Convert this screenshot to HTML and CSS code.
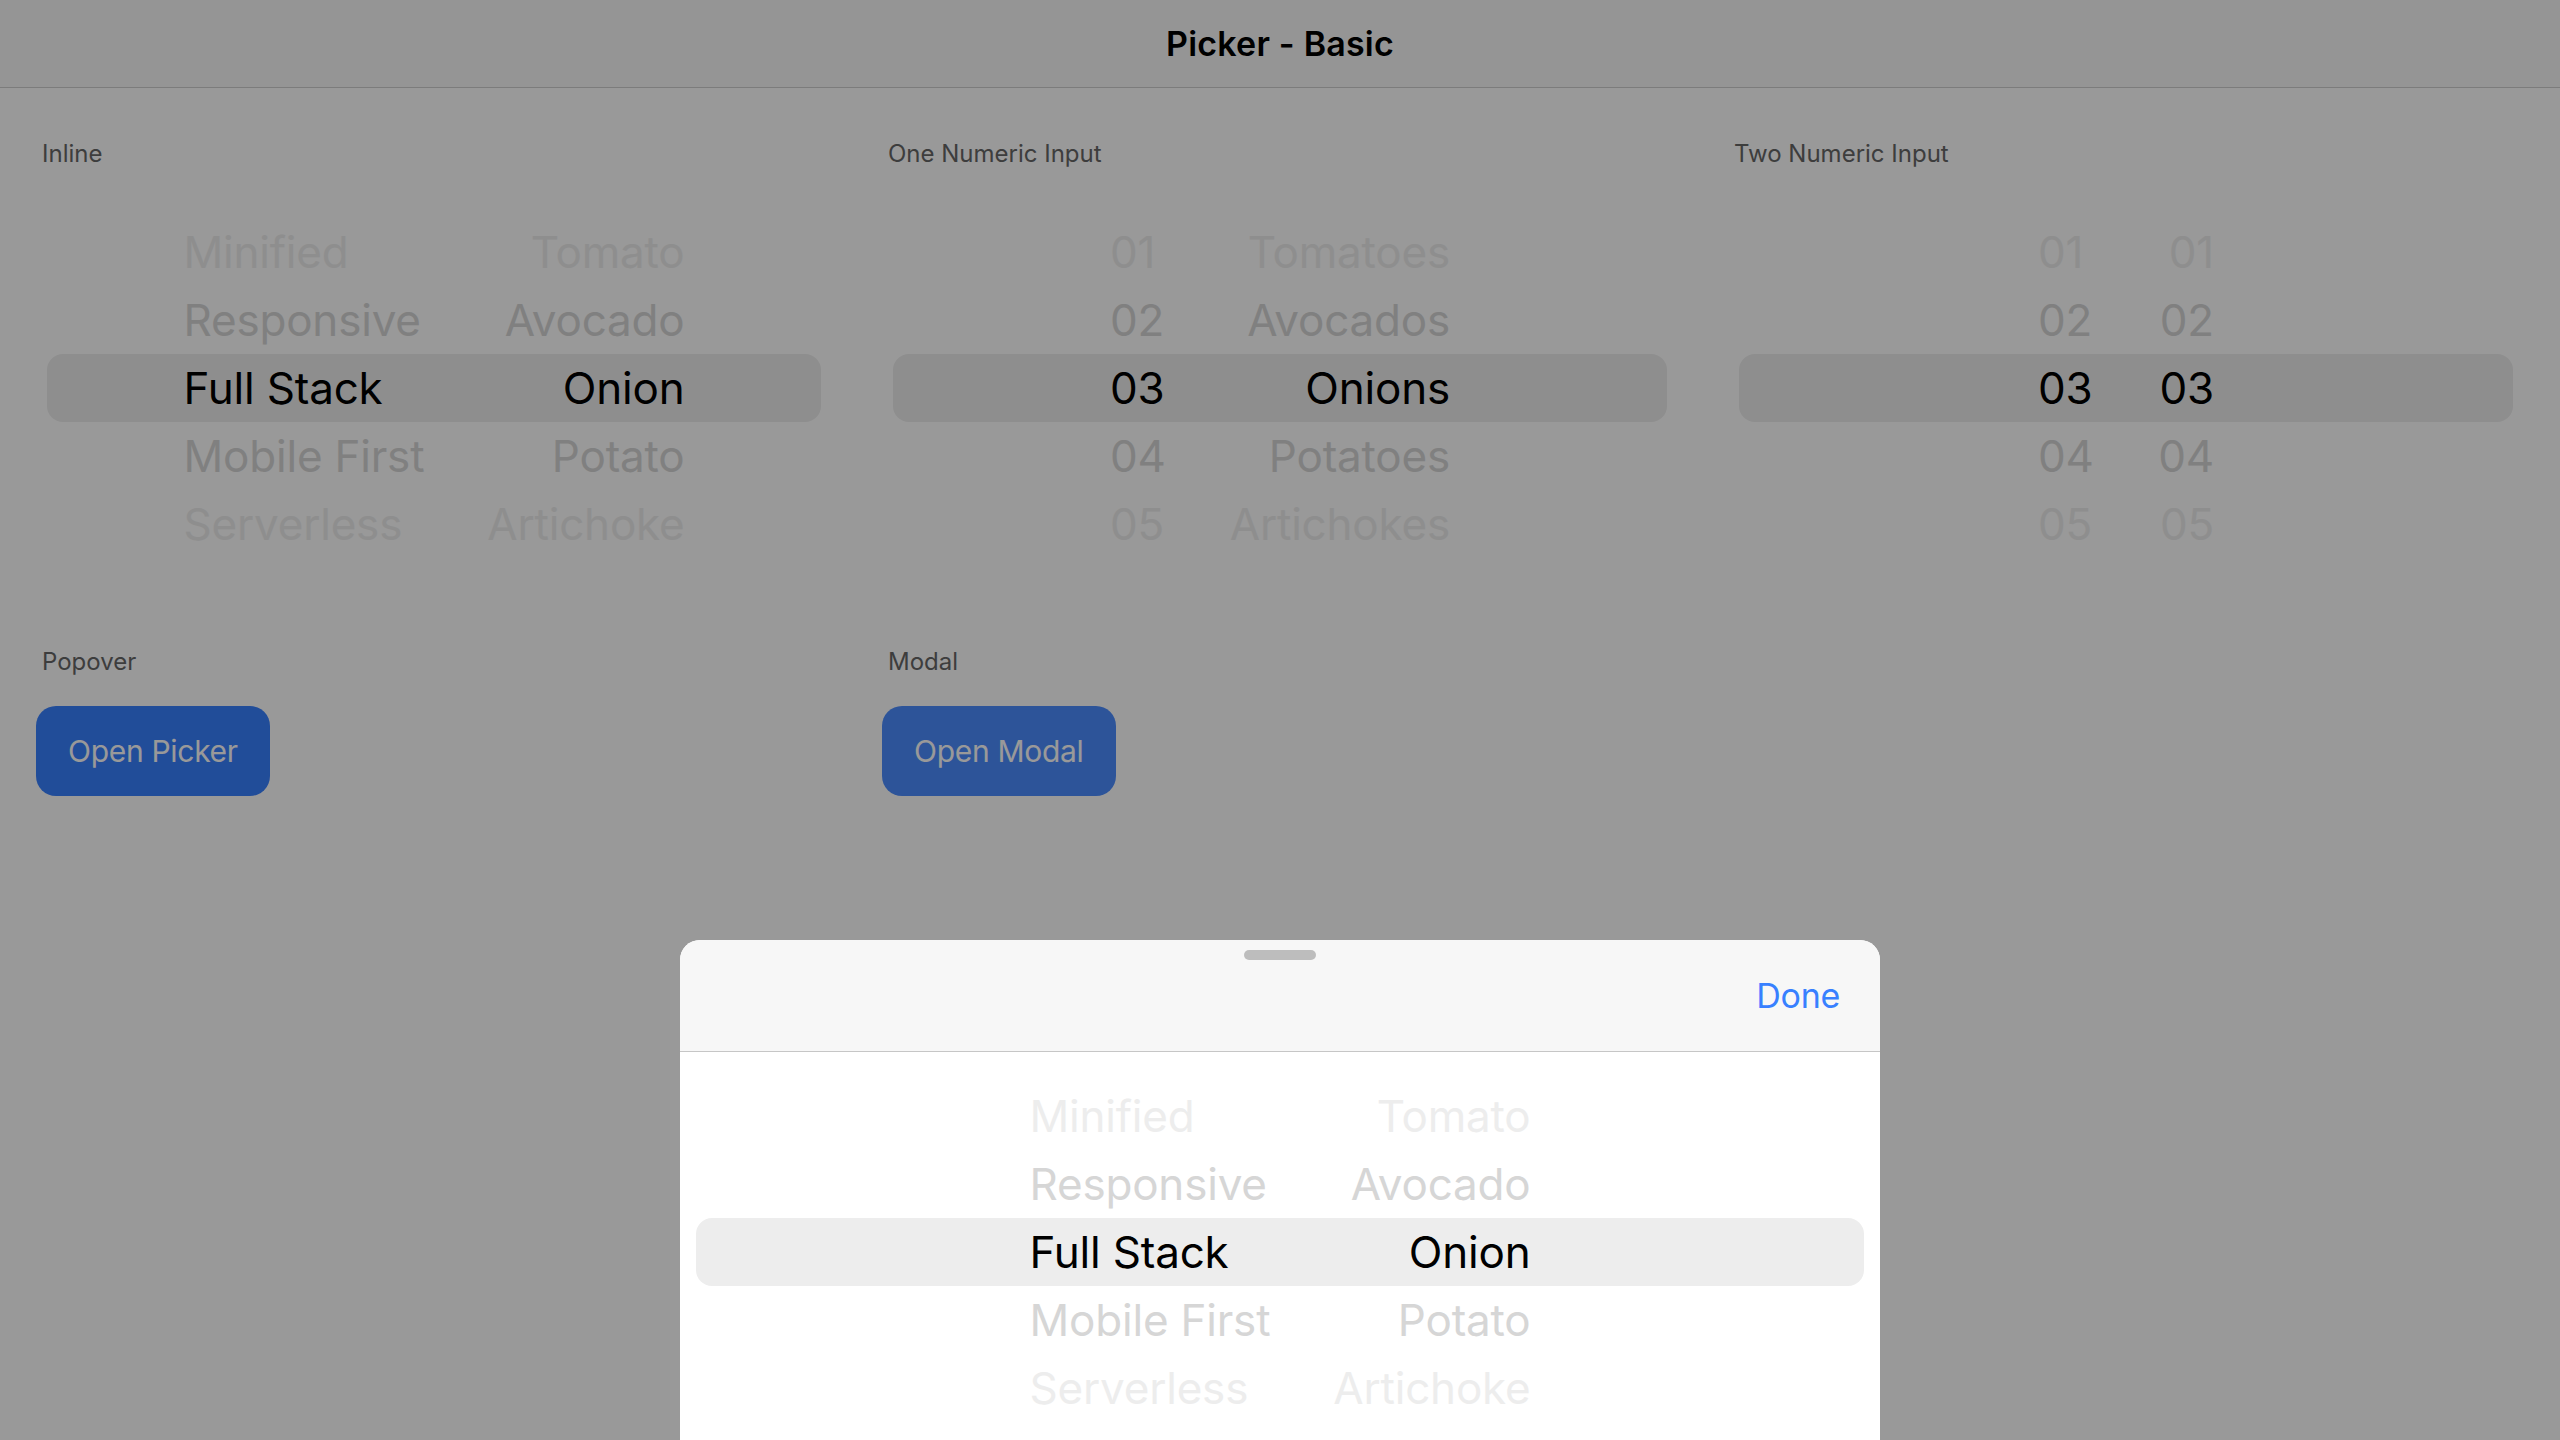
FILE: index.html
```html
<!DOCTYPE html>
<html lang="en">
<head>
<meta charset="utf-8">
<title>Picker - Basic</title>
<link rel="stylesheet" href="styles.css">
</head>
<body>
<div class="app">
  <header class="toolbar"><h1 class="title">Picker - Basic</h1></header>
  <main class="content">
    <div class="grid">
      <section class="col">
        <div class="label">Inline</div>
        <div class="picker words">
          <div class="prow far"><span class="c1">Minified</span><span class="c2">Tomato</span></div>
          <div class="prow near"><span class="c1">Responsive</span><span class="c2">Avocado</span></div>
          <div class="prow sel"><span class="c1">Full Stack</span><span class="c2">Onion</span></div>
          <div class="prow near"><span class="c1">Mobile First</span><span class="c2">Potato</span></div>
          <div class="prow far"><span class="c1">Serverless</span><span class="c2">Artichoke</span></div>
        </div>
      </section>
      <section class="col">
        <div class="label">One Numeric Input</div>
        <div class="picker numwords">
          <div class="prow far"><span class="c1">01</span><span class="c2">Tomatoes</span></div>
          <div class="prow near"><span class="c1">02</span><span class="c2">Avocados</span></div>
          <div class="prow sel"><span class="c1">03</span><span class="c2">Onions</span></div>
          <div class="prow near"><span class="c1">04</span><span class="c2">Potatoes</span></div>
          <div class="prow far"><span class="c1">05</span><span class="c2">Artichokes</span></div>
        </div>
      </section>
      <section class="col">
        <div class="label">Two Numeric Input</div>
        <div class="picker nums">
          <div class="prow far"><span class="c1">01</span><span class="c2">01</span></div>
          <div class="prow near"><span class="c1">02</span><span class="c2">02</span></div>
          <div class="prow sel"><span class="c1">03</span><span class="c2">03</span></div>
          <div class="prow near"><span class="c1">04</span><span class="c2">04</span></div>
          <div class="prow far"><span class="c1">05</span><span class="c2">05</span></div>
        </div>
      </section>
    </div>
    <div class="grid row2">
      <section class="col">
        <div class="label">Popover</div>
        <button class="btn">Open Picker</button>
      </section>
      <section class="col">
        <div class="label">Modal</div>
        <button class="btn tint">Open Modal</button>
      </section>
      <section class="col"></section>
    </div>
  </main>
  <div class="backdrop"></div>
  <div class="modal">
    <div class="modal-toolbar">
      <div class="handle"></div>
      <span class="done">Done</span>
    </div>
    <div class="picker words modal-picker">
      <div class="prow far"><span class="c1">Minified</span><span class="c2">Tomato</span></div>
      <div class="prow near"><span class="c1">Responsive</span><span class="c2">Avocado</span></div>
      <div class="prow sel"><span class="c1">Full Stack</span><span class="c2">Onion</span></div>
      <div class="prow near"><span class="c1">Mobile First</span><span class="c2">Potato</span></div>
      <div class="prow far"><span class="c1">Serverless</span><span class="c2">Artichoke</span></div>
    </div>
  </div>
</div>
</body>
</html>
```
FILE: styles.css
```css
html, body {
  margin: 0;
  padding: 0;
  width: 2560px;
  height: 1440px;
  overflow: hidden;
  background: #ffffff;
  font-family: Inter, "Noto Sans", "Liberation Sans", sans-serif;
  color: #000;
}

.app {
  position: relative;
  width: 2560px;
  height: 1440px;
}

.toolbar {
  height: 87px;
  background: #f8f8f8;
  border-bottom: 1px solid #cfcfcf;
  display: flex;
  align-items: center;
  justify-content: center;
}

.title {
  margin: 0;
  font-size: 34px;
  font-weight: 600;
  line-height: 87px;
  letter-spacing: 0.2px;
}

.content {
  padding: 0 11px;
}

.grid {
  display: grid;
  grid-template-columns: repeat(3, 1fr);
}

.col {
  display: flex;
  flex-direction: column;
  align-items: flex-start;
}

.label {
  margin: 52px 0 0 31px;
  font-size: 24px;
  line-height: 28px;
  color: #676767;
}

.picker {
  align-self: stretch;
  margin: 20px 36px 0;
  padding: 30px 0;
  height: 340px;
}

.prow {
  height: 68px;
  line-height: 68px;
  display: flex;
  justify-content: center;
  font-size: 44px;
  letter-spacing: -0.2px;
  border-radius: 16px;
  white-space: nowrap;
}

.prow.far { color: #ededed; }
.prow.near { color: #d6d6d6; }
.prow.sel { color: #000; background: #ededed; }

.c1 { text-align: left; }
.c2 { text-align: right; }

.words .c1 { width: 250px; }
.words .c2 { width: 251px; }
.numwords .c1 { width: 55px; }
.numwords .c2 { width: 285px; }
.nums .c1 { width: 88px; }
.nums .c2 { width: 88px; }

.row2 .label {
  margin-top: 60px;
}

.btn {
  margin: 30px 0 0 25px;
  height: 90px;
  padding: 0 32px;
  border: none;
  border-radius: 20px;
  background: #3880ff;
  color: #ffffff;
  font-family: Inter, "Noto Sans", "Liberation Sans", sans-serif;
  font-size: 30px;
  letter-spacing: -0.3px;
  line-height: 90px;
}

.btn.tint {
  background: #4c8dff;
}

.backdrop {
  position: absolute;
  inset: 0;
  background: rgba(0, 0, 0, 0.4);
}

.modal {
  position: absolute;
  left: 680px;
  top: 940px;
  width: 1200px;
  height: 520px;
  background: #ffffff;
  border-radius: 20px 20px 0 0;
  overflow: hidden;
}

.modal-toolbar {
  position: relative;
  height: 111px;
  background: #f7f7f7;
  border-bottom: 1px solid #c6c6c6;
  display: flex;
  align-items: center;
  justify-content: flex-end;
  padding-right: 40px;
}

.handle {
  position: absolute;
  top: 10px;
  left: 564px;
  width: 72px;
  height: 10px;
  border-radius: 5px;
  background: #bdbdbd;
}

.done {
  font-size: 34px;
  color: #3880ff;
  line-height: 40px;
  letter-spacing: -0.3px;
}

.modal-picker {
  margin: 0 16px;
}
```
